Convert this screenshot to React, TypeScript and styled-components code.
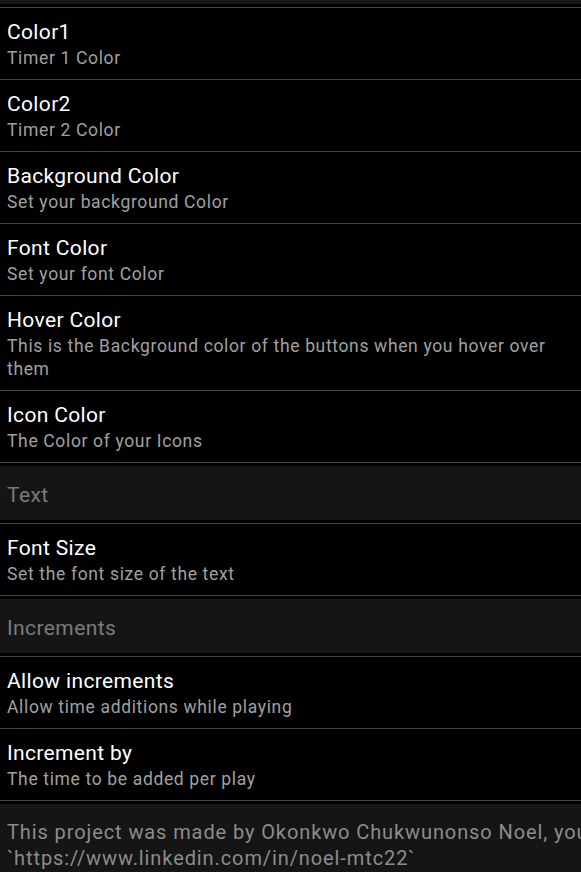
import React from "react";
import styled, { createGlobalStyle } from "styled-components";

const Global = createGlobalStyle`
  html, body {
    margin: 0;
    padding: 0;
    background: #000;
  }
  body {
    font-family: Roboto, "Noto Sans", sans-serif;
    -webkit-font-smoothing: antialiased;
  }
`;

const Screen = styled.div`
  width: 581px;
  height: 872px;
  overflow: hidden;
  background: #000;
  display: flex;
  flex-direction: column;
`;

const Category = styled.div<{ $offset?: number }>`
  padding: 3px 0;
  border-bottom: 1px solid #444;
  margin-top: ${(p) => (p.$offset ? `-${p.$offset}px` : "0")};
  flex-shrink: 0;
`;

const CategoryBand = styled.div`
  height: 54px;
  background: #151515;
  display: flex;
  align-items: center;
  padding: 3px 7px 0;
  box-sizing: border-box;
  font-size: 21px;
  letter-spacing: 0.4px;
  color: #7b7b7b;
`;

const Pref = styled.div`
  padding: 11px 7px 9px;
  border-bottom: 1px solid #444;
  flex-shrink: 0;
`;

const Texts = styled.div`
  display: flex;
  flex-direction: column;
  gap: 2px;
`;

const Title = styled.div`
  font-size: 21px;
  line-height: 26px;
  letter-spacing: 0.35px;
  color: #fff;
`;

const Summary = styled.div`
  font-size: 17.5px;
  line-height: 23px;
  letter-spacing: 0.65px;
  color: #a0a0a0;
`;

const Footer = styled.div`
  margin-top: 3px;
  background: #151515;
  padding: 15px 7px 20px;
  flex: 1;
  white-space: pre;
  overflow: hidden;
  font-size: 20px;
  line-height: 26px;
  letter-spacing: 0.9px;
  color: #8c8c8c;
`;

type Item =
  | { kind: "pref"; title: string; summary: string }
  | { kind: "cat"; label: string };

const items: Item[] = [
  { kind: "pref", title: "Color1", summary: "Timer 1 Color" },
  { kind: "pref", title: "Color2", summary: "Timer 2 Color" },
  { kind: "pref", title: "Background Color", summary: "Set your background Color" },
  { kind: "pref", title: "Font Color", summary: "Set your font Color" },
  {
    kind: "pref",
    title: "Hover Color",
    summary: "This is the Background color of the buttons when you hover over them",
  },
  { kind: "pref", title: "Icon Color", summary: "The Color of your Icons" },
  { kind: "cat", label: "Text" },
  { kind: "pref", title: "Font Size", summary: "Set the font size of the text" },
  { kind: "cat", label: "Increments" },
  { kind: "pref", title: "Allow increments", summary: "Allow time additions while playing" },
  { kind: "pref", title: "Increment by", summary: "The time to be added per play" },
];

export default function App() {
  return (
    <>
      <Global />
      <Screen>
        <Category $offset={53}>
          <CategoryBand />
        </Category>
        {items.map((it, i) =>
          it.kind === "cat" ? (
            <Category key={i}>
              <CategoryBand>{it.label}</CategoryBand>
            </Category>
          ) : (
            <Pref key={i}>
              <Texts>
                <Title>{it.title}</Title>
                <Summary>{it.summary}</Summary>
              </Texts>
            </Pref>
          )
        )}
        <Footer>
          {"This project was made by Okonkwo Chukwunonso Noel, you\n`https://www.linkedin.com/in/noel-mtc22`"}
        </Footer>
      </Screen>
    </>
  );
}
